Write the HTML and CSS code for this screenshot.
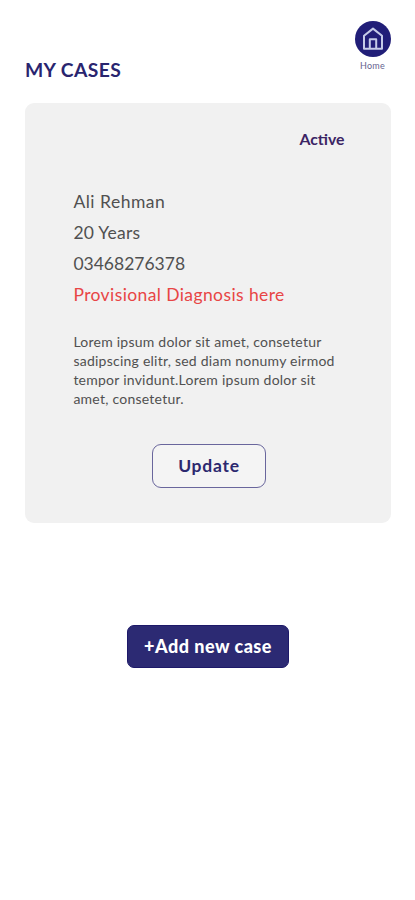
FILE: index.html
```html
<!DOCTYPE html>
<html lang="en">
<head>
<meta charset="utf-8">
<meta name="viewport" content="width=device-width, initial-scale=1">
<title>My Cases</title>
<link rel="stylesheet" href="styles.css">
</head>
<body>
<header class="header">
  <h1 class="title">MY CASES</h1>
  <a class="home">
    <svg class="home-icon" viewBox="0 0 36 36" aria-hidden="true">
      <circle cx="18" cy="18" r="18"/>
      <path d="M9 14.8 18 7.6l9 7.2v13H9zM14.8 27.8v-9.5h6.4v9.5"/>
    </svg>
    <span class="home-label">Home</span>
  </a>
</header>
<main>
  <section class="card">
    <div class="status">Active</div>
    <div class="details">
      <div class="name">Ali Rehman</div>
      <div class="age">20 Years</div>
      <div class="phone">03468276378</div>
      <div class="diagnosis">Provisional Diagnosis here</div>
    </div>
    <p class="notes">Lorem ipsum dolor sit amet, consetetur<br>sadipscing elitr, sed diam nonumy eirmod<br>tempor invidunt.Lorem ipsum dolor sit<br>amet, consetetur.</p>
    <button class="update">Update</button>
  </section>
  <button class="add">+Add new case</button>
</main>
</body>
</html>
```
FILE: styles.css
```css
* { box-sizing: border-box; }
body {
  margin: 0;
  background: #fff;
  color: #505050;
  font-family: Lato, "Liberation Sans", sans-serif;
}
.header {
  height: 103px;
  padding: 20.5px 24.5px 0 25px;
  display: flex;
  justify-content: space-between;
  align-items: flex-start;
}
.title {
  margin: 37px 0 0;
  font-size: 19.3px;
  line-height: 24px;
  font-weight: 700;
  letter-spacing: 0.4px;
  color: #29256f;
}
.home {
  width: 36px;
  display: flex;
  flex-direction: column;
  align-items: center;
}
.home-icon { width: 36px; height: 36px; }
.home-icon circle { fill: #211e78; }
.home-icon path { fill: none; stroke: #c5cbe8; stroke-width: 2; stroke-linejoin: round; }
.home-label {
  margin-top: 3.5px;
  font-size: 9px;
  line-height: 12px;
  letter-spacing: 0.2px;
  color: #66638f;
}
.card {
  width: 366px;
  height: 420px;
  margin: 0 24px 0 25px;
  padding: 26px 46.5px 0 48.4px;
  border-radius: 9px;
  background: #f1f1f1;
  display: flex;
  flex-direction: column;
}
.status {
  align-self: flex-end;
  font-size: 15.8px;
  line-height: 20px;
  font-weight: 700;
  color: #3b2464;
}
.details {
  margin-top: 37px;
  font-size: 17.5px;
  line-height: 31px;
  white-space: nowrap;
}
.name { letter-spacing: 0.5px; }
.age { letter-spacing: 0.25px; }
.diagnosis { color: #e84545; letter-spacing: 0.4px; }
.notes {
  margin: 22px 0 0;
  font-size: 14px;
  line-height: 19px;
  letter-spacing: 0.24px;
  white-space: nowrap;
}
.update, .add {
  font-family: inherit;
  white-space: nowrap;
}
.update {
  align-self: center;
  width: 114px;
  height: 44px;
  margin-top: 36px;
  padding: 0 0 2px;
  border: 1px solid #69669c;
  border-radius: 9px;
  background: #f4f4f4;
  color: #2c286f;
  font-size: 17.5px;
  font-weight: 700;
  letter-spacing: 0.75px;
}
.add {
  display: block;
  width: 162px;
  height: 43px;
  margin: 102px 0 0 127px;
  padding: 0 0 1px;
  border: 1px solid #1d1969;
  border-radius: 7px;
  background: #2c2a73;
  color: #fff;
  font-size: 18px;
  font-weight: 900;
  letter-spacing: 0.5px;
}
```
